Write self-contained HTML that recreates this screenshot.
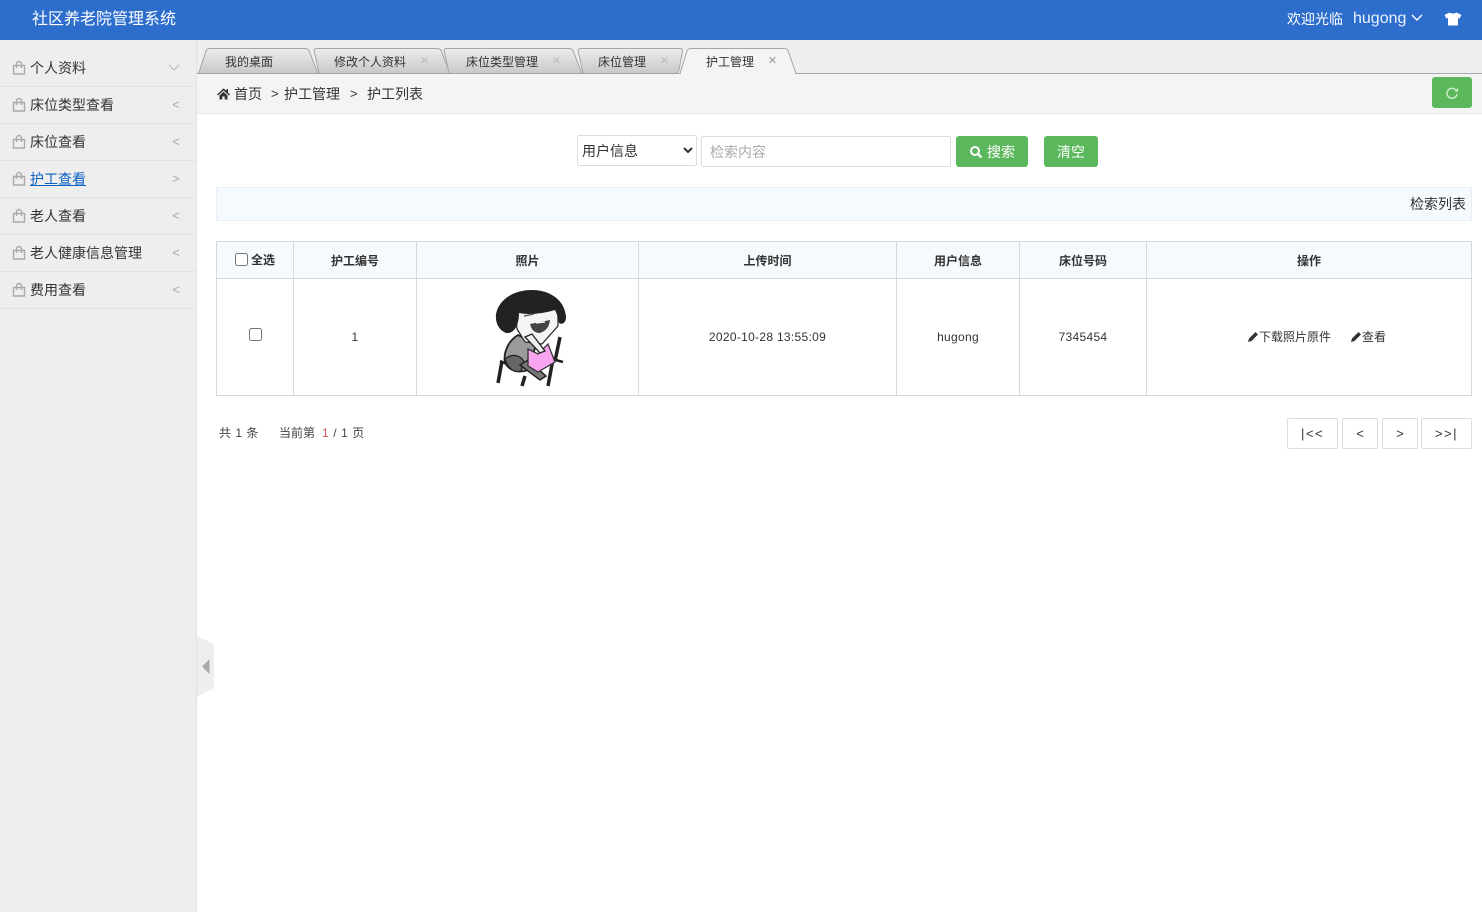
<!DOCTYPE html>
<html lang="zh">
<head>
<meta charset="utf-8">
<title>社区养老院管理系统</title>
<style>
*{box-sizing:border-box}
html,body{margin:0;padding:0;width:1482px;height:912px;overflow:hidden;background:#fff;color:#333;font-family:"Liberation Sans","Noto Sans CJK SC",sans-serif;font-size:14px}
.a{position:absolute;white-space:nowrap}
.c{text-align:center}
#top{left:0;top:0;width:1482px;height:40px;background:#2d6dcc}
#side{left:0;top:40px;width:197px;height:872px;background:#eee;border-right:1px solid #e2e2e2}
.m{left:0;width:196px;height:37px;border-bottom:1px solid #e3e3e3}
.mt{left:30px;line-height:20px;height:20px;color:#333}
.ar{left:171px;width:10px;text-align:center;color:#aaa;font-size:13px;line-height:16px;height:16px}
th,td{border:1px solid #d9d9d9;padding:0;text-align:center;font-size:12px;color:#333}
th{background:#f5fafe;font-weight:bold;height:37px}
td{height:117px;letter-spacing:.3px}
table{border-collapse:collapse;table-layout:fixed;position:absolute;left:216px;top:241px;width:1255px}
.btn{background:#5cb85c;border-radius:3px;color:#fff;line-height:31px;height:31px;text-align:center}
.pg{top:418px;height:31px;border:1px solid #ddd;border-radius:2px;line-height:29px;text-align:center;color:#333;font-size:13px;background:#fff}
input[type=checkbox]{margin:0;width:13px;height:13px;position:absolute}
.tt{top:54px;line-height:16px;height:16px;font-size:12px;color:#333}
.x{top:54px;line-height:14px;height:14px;font-size:15px;color:#bbb}
</style>
</head>
<body>
<div class="a" id="top"></div>
<div class="a" style="left:32px;top:10px;color:#fff;font-size:16px;line-height:20px">社区养老院管理系统</div>
<div class="a" style="left:1287px;top:9px;color:#fff;font-size:14px;line-height:20px">欢迎光临</div>
<div class="a" style="left:1353px;top:9px;color:#eaf3ff;font-size:16px;line-height:20px">hugong</div>
<svg class="a" style="left:1411px;top:14px" width="12" height="8" viewBox="0 0 12 8"><path d="M1 1l5 5 5-5" fill="none" stroke="#fff" stroke-width="1.4"/></svg>
<svg class="a" style="left:1444px;top:12px" width="18" height="14" viewBox="0 0 18 14"><path d="M5.500 0.500C7 1.800 11 1.800 12.500 0.500L17.500 3 15.500 6.500 14 6V13.500H4V6L2.500 6.500 0.500 3Z" fill="#fff"/></svg>

<div class="a" id="side"></div>
<div class="a m" style="top:50px"></div><div class="a m" style="top:87px"></div><div class="a m" style="top:124px"></div><div class="a m" style="top:161px"></div><div class="a m" style="top:198px"></div><div class="a m" style="top:235px"></div><div class="a m" style="top:272px"></div>
<svg class="a" style="left:12px;top:61px" width="14" height="330" viewBox="0 0 14 330" fill="none" stroke="#aaa" stroke-width="1.400">
<path d="M1.500 4.500h11v8.500h-11zM4.500 7V3a2.500 2.500 0 0 1 5 0v4"/>
<path transform="translate(0,37)" d="M1.500 4.500h11v8.500h-11zM4.500 7V3a2.500 2.500 0 0 1 5 0v4"/>
<path transform="translate(0,74)" d="M1.500 4.500h11v8.500h-11zM4.500 7V3a2.500 2.500 0 0 1 5 0v4"/>
<path transform="translate(0,111)" d="M1.500 4.500h11v8.500h-11zM4.500 7V3a2.500 2.500 0 0 1 5 0v4"/>
<path transform="translate(0,148)" d="M1.500 4.500h11v8.500h-11zM4.500 7V3a2.500 2.500 0 0 1 5 0v4"/>
<path transform="translate(0,185)" d="M1.500 4.500h11v8.500h-11zM4.500 7V3a2.500 2.500 0 0 1 5 0v4"/>
<path transform="translate(0,222)" d="M1.500 4.500h11v8.500h-11zM4.500 7V3a2.500 2.500 0 0 1 5 0v4"/>
</svg>
<div class="a mt" style="top:58px">个人资料</div>
<div class="a mt" style="top:95px">床位类型查看</div>
<div class="a mt" style="top:132px">床位查看</div>
<div class="a mt" style="top:169px;color:#0b62c4;text-decoration:underline">护工查看</div>
<div class="a mt" style="top:206px">老人查看</div>
<div class="a mt" style="top:243px">老人健康信息管理</div>
<div class="a mt" style="top:280px">费用查看</div>
<svg class="a" style="left:168px;top:64px" width="12" height="8" viewBox="0 0 12 8"><path d="M1 1l5 5 5-5" fill="none" stroke="#bbb" stroke-width="1.200"/></svg>
<div class="a ar" style="top:97px">&lt;</div>
<div class="a ar" style="top:134px">&lt;</div>
<div class="a ar" style="top:171px">&gt;</div>
<div class="a ar" style="top:208px">&lt;</div>
<div class="a ar" style="top:245px">&lt;</div>
<div class="a ar" style="top:282px">&lt;</div>

<div class="a" style="left:197px;top:40px;width:1285px;height:34px;background:#eeeff1;border-bottom:1px solid #aaa"></div>
<svg class="a" style="left:197px;top:40px" width="620" height="36" viewBox="0 0 620 36">
<defs><linearGradient id="g" x1="0" y1="0" x2="0" y2="1"><stop offset="0" stop-color="#ededed"/><stop offset="1" stop-color="#c8c8c8"/></linearGradient></defs>
<g fill="url(#g)" stroke="#a5a5a5" stroke-width="1">
<path d="M1.500 33.500L9 11Q10 8.500 13 8.500H108Q111 8.500 112 10.500L121 33.500Z"/>
<path d="M117 10Q117.500 8.500 120 8.500H240Q243 8.500 244 10.500L253 33.500H122Z"/>
<path d="M247 10Q247.500 8.500 250 8.500H372Q375 8.500 376 10.500L385 33.500H252Z"/>
<path d="M381 10Q381.500 8.500 384 8.500H483Q486 8.500 485.500 11L482 30Q481 33.500 477 33.500H386Z"/>
</g>
<path d="M483 33.500L490 11Q491 8.500 494 8.500H587Q590 8.500 591 10.500L599 33.500" fill="#f4f4f4" stroke="#a5a5a5"/>
<path d="M484 33H598V35H484Z" fill="#f4f4f4"/>
</svg>
<div class="a tt" style="left:225px">我的桌面</div>
<div class="a tt" style="left:334px">修改个人资料</div><div class="a x" style="left:420px">×</div>
<div class="a tt" style="left:466px">床位类型管理</div><div class="a x" style="left:552px">×</div>
<div class="a tt" style="left:598px">床位管理</div><div class="a x" style="left:660px">×</div>
<div class="a tt" style="left:706px">护工管理</div><div class="a x" style="left:768px;color:#999">×</div>

<div class="a" style="left:197px;top:74px;width:1285px;height:40px;background:#f4f4f4;border-bottom:1px solid #e6e6e6"></div>
<svg class="a" style="left:217px;top:88px" width="13" height="12" viewBox="0 0 13 12"><path d="M6.500 0.500L0 6.500l1 1 5.500-5 5.500 5 1-1-2-1.900V1H9.500v1.800ZM2.500 7.500V11.500H5.300V8.500H7.700V11.500H10.500V7.500L6.500 3.800Z" fill="#333"/></svg>
<div class="a" style="left:234px;top:84px;line-height:20px">首页</div>
<div class="a" style="left:271px;top:84px;line-height:20px;font-size:13px">&gt;</div>
<div class="a" style="left:284px;top:84px;line-height:20px">护工管理</div>
<div class="a" style="left:350px;top:84px;line-height:20px;font-size:13px">&gt;</div>
<div class="a" style="left:367px;top:84px;line-height:20px">护工列表</div>
<div class="a btn" style="left:1432px;top:77px;width:40px;height:31px"></div>
<svg class="a" style="left:1445px;top:86px" width="14" height="14" viewBox="0 0 14 14"><path d="M11.500 5A5 5 0 1 0 12 8" fill="none" stroke="#d8f0d8" stroke-width="1.300"/><path d="M9.500 5.500H13V2Z" fill="#d8f0d8"/></svg>

<select class="a" style="left:577px;top:135px;width:120px;height:31px;font:14px 'Liberation Sans','Noto Sans CJK SC',sans-serif;color:#333;background:#fff;border:1px solid #ddd;border-radius:2px;padding:0"><option>用户信息</option></select>
<div class="a" style="left:701px;top:136px;width:250px;height:31px;border:1px solid #ddd;border-radius:2px;background:#fff;color:#aaa;line-height:30px;padding-left:8px">检索内容</div>
<div class="a btn" style="left:956px;top:136px;width:72px;padding-left:18px;line-height:32px">搜索</div>
<svg class="a" style="left:969px;top:145px" width="14" height="14" viewBox="0 0 14 14"><circle cx="6" cy="6" r="4" fill="none" stroke="#fff" stroke-width="2"/><path d="M9 9l3.500 3.500" stroke="#fff" stroke-width="2.200"/></svg>
<div class="a btn" style="left:1044px;top:136px;width:54px;line-height:32px">清空</div>

<div class="a" style="left:216px;top:187px;width:1256px;height:34px;background:#f5fafe;border:1px solid #eaeef2"></div>
<div class="a" style="left:1410px;top:194px;line-height:20px;color:#333">检索列表</div>

<table>
<colgroup><col style="width:77px"><col style="width:123px"><col style="width:222px"><col style="width:258px"><col style="width:123px"><col style="width:127px"><col style="width:325px"></colgroup>
<tr><th></th><th>护工编号</th><th>照片</th><th>上传时间</th><th>用户信息</th><th>床位号码</th><th>操作</th></tr>
<tr><td></td><td>1</td><td></td><td>2020-10-28 13:55:09</td><td>hugong</td><td>7345454</td><td></td></tr>
</table>
<input type="checkbox" style="left:235px;top:253px">
<div class="a" style="left:251px;top:252px;font-size:12px;font-weight:bold;line-height:16px">全选</div>
<input type="checkbox" style="left:249px;top:328px">

<svg class="a" style="left:490px;top:287px" width="80" height="100" viewBox="0 0 80 100">
<path d="M12 74L8 96M35 89L32 99M63 72L58 99M70 50L65 74" stroke="#222" stroke-width="3.500" fill="none"/>
<path d="M10 74L24 80M62 72L73 75" stroke="#222" stroke-width="2.500" fill="none"/>
<path d="M28 48C18 54 13 66 15 76C21 86 32 86 40 82L46 56Z" fill="#9a9a9a" stroke="#222" stroke-width="1.800"/>
<path d="M15 72C22 66 31 68 34 75L31 84C24 86 18 82 15 72Z" fill="#666" stroke="#222" stroke-width="1.300"/>
<path d="M30 78L50 93 56 89 38 73Z" fill="#777" stroke="#222" stroke-width="1.500"/>
<path d="M38 62L48 67 58 57 65 75 48 85 38 79Z" fill="#f8a4ee" stroke="#333" stroke-width="1.300"/>
<path d="M25 20L27 42 35 55 52 57 68 39 68 18Z" fill="#f4f4f4" stroke="#222" stroke-width="1.200"/>
<path d="M34 29L44 27M52 25L62 23" stroke="#666" stroke-width="1.500" fill="none"/>
<path d="M40 37Q50 35 60 33 59 43 50 46 42 46 40 37Z" fill="#444"/>
<path d="M46 36L55 35" stroke="#fff" stroke-width="1.200"/>
<path d="M35 50L50 66 55 64 42 47Z" fill="#eee" stroke="#222" stroke-width="1.300"/>
<path d="M16 46C9 43 5 36 6 27C9 12 24 3 42 3C61 3 75 14 76 30C76 36 72 38 69 36C68 31 67 27 65 23C52 27 38 28 29 26C29 37 25 47 16 46Z" fill="#222"/>
</svg>

<svg class="a" style="left:1248px;top:331px" width="11" height="11" viewBox="0 0 11 11"><path d="M0 11L1 7.500 7.500 1 10 3.500 3.500 10Z" fill="#333"/></svg>
<div class="a" style="left:1259px;top:329px;font-size:12px;line-height:16px">下载照片原件</div>
<svg class="a" style="left:1351px;top:331px" width="11" height="11" viewBox="0 0 11 11"><path d="M0 11L1 7.500 7.500 1 10 3.500 3.500 10Z" fill="#333"/></svg>
<div class="a" style="left:1362px;top:329px;font-size:12px;line-height:16px">查看</div>

<div class="a" style="left:219px;top:425px;font-size:12px;line-height:16px;color:#444;word-spacing:1px">共 1 条</div>
<div class="a" style="left:279px;top:425px;font-size:12px;line-height:16px;color:#444">当前第</div>
<div class="a" style="left:322px;top:425px;font-size:12px;line-height:16px;color:#444;word-spacing:1.200px"><span style="color:#d9534f">1</span> / 1 页</div>
<div class="a pg" style="left:1287px;width:51px;letter-spacing:1.500px">|&lt;&lt;</div>
<div class="a pg" style="left:1342px;width:36px">&lt;</div>
<div class="a pg" style="left:1382px;width:36px">&gt;</div>
<div class="a pg" style="left:1421px;width:51px;letter-spacing:1.500px">&gt;&gt;|</div>

<svg class="a" style="left:197px;top:636px" width="18" height="62" viewBox="0 0 18 62"><path d="M0 0L17 8V52L0 61Z" fill="#eee"/><path d="M5 30.500L12.500 23V38Z" fill="#aaa"/></svg>
</body>
</html>
